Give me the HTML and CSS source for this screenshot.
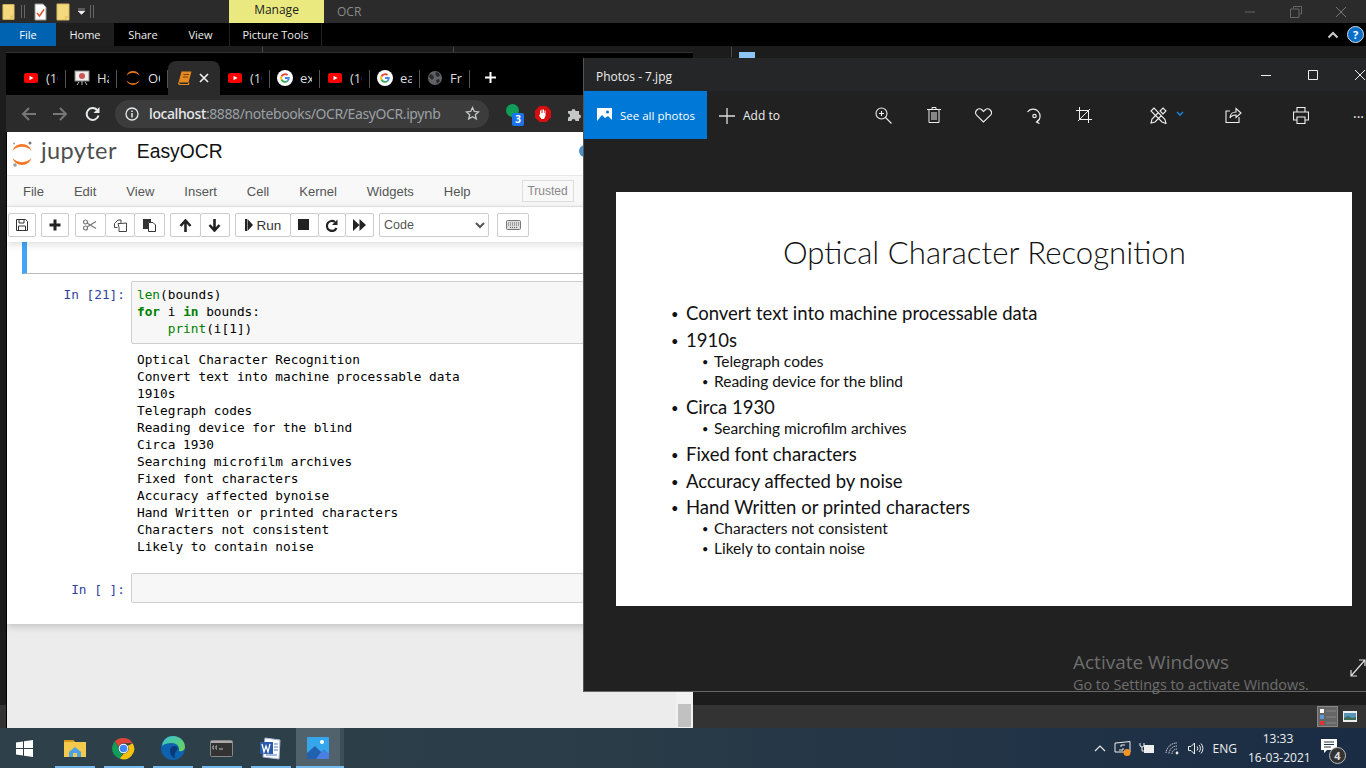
FILE: index.html
```html
<!DOCTYPE html>
<html>

<head>
  <meta charset="UTF-8">
  <title>OCR</title>
  <link rel="stylesheet" href="styles.css">
</head>

<body>
  <svg class="defs" width="0" height="0">
    <symbol id="yt" viewBox="0 0 16 16">
      <rect x="1" y="3" width="14" height="10" rx="2.5" fill="#f00" />
      <path d="M6.500 5.700v4.600L10.500 8z" fill="#fff" />
    </symbol>
    <symbol id="goog" viewBox="0 0 16 16">
      <circle cx="8" cy="8" r="8" fill="#fff" />
      <path d="M8 3.200a4.800 4.800 0 0 1 3.200 1.200L9.900 5.700A3 3 0 0 0 5.200 7L3.700 5.800A4.800 4.800 0 0 1 8 3.200z" fill="#ea4335" />
      <path d="M3.700 5.800L5.200 7a3 3 0 0 0 0 2L3.700 10.200a4.800 4.800 0 0 1 0-4.400z" fill="#fbbc05" />
      <path d="M3.700 10.200L5.200 9A3 3 0 0 0 9.800 10.400l1.400 1.200A4.800 4.800 0 0 1 3.700 10.200z" fill="#34a853" />
      <path d="M8 7.100h4.700a4.800 4.800 0 0 1-1.500 4.500L9.800 10.400a2 2 0 0 0 .9-1.500H8z" fill="#4285f4" />
    </symbol>
    <symbol id="folder" viewBox="0 0 14 18">
      <path d="M1 1h12v16H1z" fill="#f5d97e" stroke="#d9b95c" />
      <path d="M9 17v-4h4" fill="#e5c468" />
    </symbol>
  </svg>

  <div class="desktop">
    <div class="explorer">
      <div class="titlebar">
        <div class="quick">
          <svg class="qfolder" width="13" height="18"><use href="#folder" /></svg>
          <span class="qsep"></span>
          <svg class="qcheck" width="13" height="18" viewBox="0 0 13 18">
            <path d="M1 1h8l3 3v13H1z" fill="#fff" stroke="#999" />
            <path d="M3 10l2.500 3L10 6.500" fill="none" stroke="#d9532c" stroke-width="1.500" />
          </svg>
          <svg class="qfolder2" width="14" height="18"><use href="#folder" /></svg>
          <svg class="qdrop" width="7" height="7" viewBox="0 0 7 7">
            <path d="M0 1h7M0 3h7l-3.500 3.500z" fill="#eee" stroke="#eee" stroke-width=".5" />
          </svg>
          <span class="qsep"></span>
        </div>
        <div class="manage">Manage</div>
        <div class="wintitle">OCR</div>
        <div class="winbtns">
          <svg width="12" height="12" viewBox="0 0 12 12"><path d="M1 6h10" stroke="#666" /></svg>
          <svg width="12" height="12" viewBox="0 0 12 12">
            <path d="M3.500 2.500V.5h8v7.500h-2M.5 3h8.500v8.500H.5z" fill="none" stroke="#666" />
          </svg>
          <svg width="12" height="12" viewBox="0 0 12 12"><path d="M1 1l10 10M11 1L1 11" stroke="#777" /></svg>
        </div>
      </div>

      <div class="ribbon">
        <div class="rtab rfile">File</div>
        <div class="rtab rhome">Home</div>
        <div class="rtab rshare">Share</div>
        <div class="rtab rview">View</div>
        <div class="rtab rtools">Picture Tools</div>
        <div class="rright">
          <svg width="12" height="8" viewBox="0 0 12 8"><path d="M1.500 6.500L6 2l4.500 4.500" fill="none" stroke="#ccc" stroke-width="2" /></svg>
          <span class="help">?</span>
        </div>
      </div>

      <div class="exbody">
        <span class="exline exline1"></span>
        <span class="exline exline2"></span>
        <span class="exline exline3"></span>
        <span class="exthumb"></span>
      </div>

      <div class="statusbar">
        <span class="viewlist">
          <svg width="17" height="17" viewBox="0 0 17 17">
            <path d="M1 1h4v4H1z" fill="#fff" />
            <path d="M1 7h4v4H1z" fill="#5b9bd5" />
            <path d="M1 13h4v4H1z" fill="#d33" />
            <path d="M7 3h10M7 9h10M7 15h10" stroke="#888" />
          </svg>
        </span>
        <span class="viewthumb">
          <svg width="14" height="11" viewBox="0 0 14 11">
            <rect width="14" height="11" fill="#eee" />
            <rect x="1" y="2" width="12" height="7" fill="#5a93b8" />
            <path d="M1 7l4-2 4 2 4-1v3H1z" fill="#3e6b55" />
          </svg>
        </span>
      </div>
    </div>

    <div class="chrome">
      <div class="tabs">
        <div class="tab"><svg width="16" height="16"><use href="#yt" /></svg><span class="tabtext">(10)</span></div>
        <div class="tab">
          <svg width="16" height="16" viewBox="0 0 16 16">
            <rect x="1" y="1" width="14" height="10" fill="#eee" stroke="#888" />
            <circle cx="8" cy="6" r="3" fill="#c55" />
            <path d="M5 12l-2 3M11 12l2 3M8 11v4" stroke="#bbb" />
          </svg>
          <span class="tabtext">Ha</span>
        </div>
        <div class="tab">
          <svg width="16" height="16" viewBox="0 0 16 16">
            <path d="M1.500 5.500a7 7 0 0 1 13 0 9 9 0 0 0-13 0zM1.500 10.500a7 7 0 0 0 13 0 9 9 0 0 1-13 0z" fill="#e6761c" />
          </svg>
          <span class="tabtext">OCR</span>
        </div>
        <div class="tab tab-active">
          <svg width="16" height="16" viewBox="0 0 16 16">
            <path d="M4.500 1.500h10l-3 11h-10z" fill="#e58a1f" />
            <path d="M1.500 12.500c0 2 1 2 2 2h8l.5-2" fill="none" stroke="#e58a1f" stroke-width="1.200" />
            <path d="M6.500 4.500h5.500M6 7h5" stroke="#7a4408" />
          </svg>
          <svg class="tabclose" width="10" height="10" viewBox="0 0 10 10"><path d="M1 1l8 8M9 1L1 9" stroke="#eee" stroke-width="1.700" /></svg>
        </div>
        <div class="tab"><svg width="16" height="16"><use href="#yt" /></svg><span class="tabtext">(10)</span></div>
        <div class="tab"><svg width="16" height="16"><use href="#goog" /></svg><span class="tabtext">exa</span></div>
        <div class="tab"><svg width="16" height="16"><use href="#yt" /></svg><span class="tabtext">(10)</span></div>
        <div class="tab"><svg width="16" height="16"><use href="#goog" /></svg><span class="tabtext">eas</span></div>
        <div class="tab">
          <svg width="16" height="16" viewBox="0 0 16 16">
            <circle cx="8" cy="8" r="7" fill="#5f6368" />
            <path d="M3 4l3 1 1 3-2 2-3-3zM9 2l3 1 1 3-3 1-2-3zM9 10l3-1 1 2-3 3z" fill="#2a2a2a" />
          </svg>
          <span class="tabtext">Fr</span>
        </div>
        <svg class="newtab" width="13" height="13" viewBox="0 0 13 13"><path d="M6.500 1v11M1 6.500h11" stroke="#fff" stroke-width="2" /></svg>
      </div>

      <div class="toolbar">
        <svg class="navbtn" width="16" height="16" viewBox="0 0 16 16"><path d="M15 8H2M8 2L2 8l6 6" fill="none" stroke="#777" stroke-width="2" /></svg>
        <svg class="navbtn" width="16" height="16" viewBox="0 0 16 16"><path d="M1 8h13M8 2l6 6-6 6" fill="none" stroke="#777" stroke-width="2" /></svg>
        <svg class="navbtn nav-reload" width="16" height="16" viewBox="0 0 16 16"><path d="M13.500 9.500A6 6 0 1 1 12 3.800" fill="none" stroke="#e8eaed" stroke-width="2" /><path d="M14.500 1v6h-6z" fill="#e8eaed" /></svg>
        <div class="omnibox">
          <svg width="14" height="14" viewBox="0 0 14 14">
            <circle cx="7" cy="7" r="6" fill="none" stroke="#e8eaed" stroke-width="1.300" />
            <path d="M7 6v4.500M7 3.500v1.500" stroke="#e8eaed" stroke-width="1.500" />
          </svg>
          <span class="url"><b>localhost</b>:8888/notebooks/OCR/EasyOCR.ipynb</span>
          <svg class="star" width="15" height="15" viewBox="0 0 15 15">
            <path d="M7.500 1.500l1.800 4 4.200.4-3.200 2.800 1 4.200-3.800-2.200-3.800 2.200 1-4.200L1.500 5.900l4.200-.4z" fill="none" stroke="#c4c7c5" stroke-width="1.300" />
          </svg>
        </div>
        <div class="ext ext-green"><span class="badge">3</span></div>
        <svg class="ext-hand" width="18" height="18" viewBox="0 0 18 18">
          <path d="M5.500 1h7L17 5.500v7L12.500 17h-7L1 12.500v-7z" fill="#d50f0f" />
          <path d="M6 9V5.500h1V8h.5V4.500h1V8H9V4.500h1V8h.5V5.500h1V11l-1.500 3H7.500L5 10.500l.5-.5z" fill="#fff" />
        </svg>
        <svg class="ext-puzzle" width="16" height="16" viewBox="0 0 16 16">
          <path d="M1 5h3.500a2 2 0 1 1 4 0H12v3.500a2 2 0 1 1 0 4V15H8.500a2 2 0 1 0-4 0H1v-3.500a2 2 0 1 0 0-4z" fill="#c4c7c5" />
        </svg>
      </div>

      <div class="page">
        <div class="nbheader">
          <svg class="jlogo" width="22" height="28" viewBox="0 0 22 28">
            <path d="M1.500 11a10 10 0 0 1 19 0 13 13 0 0 0-19 0zM1.500 18a10 10 0 0 0 19 0 13 13 0 0 1-19 0z" fill="#f37726" />
            <circle cx="19" cy="3" r="1.500" fill="#767677" />
            <circle cx="3" cy="3.500" r="1" fill="#989798" />
            <circle cx="4" cy="25" r="1.800" fill="#9e9e9e" />
          </svg>
          <span class="jname">jupyter</span>
          <span class="nbname">EasyOCR</span>
          <span class="kernelhint"></span>
        </div>

        <div class="menubar">
          <span class="mi mi-file">File</span>
          <span class="mi">Edit</span>
          <span class="mi">View</span>
          <span class="mi">Insert</span>
          <span class="mi">Cell</span>
          <span class="mi">Kernel</span>
          <span class="mi">Widgets</span>
          <span class="mi">Help</span>
          <span class="trusted">Trusted</span>
        </div>

        <div class="nbtools">
          <div class="btngroup g-save">
            <button class="btn">
              <svg width="12" height="12" viewBox="0 0 12 12"><path d="M.5.5h9l2 2v9H.5zM3 .5v3.500h5V.5M2.500 11.500V7h7v4.500" fill="none" stroke="#333" /></svg>
            </button>
          </div>
          <div class="btngroup g-add">
            <button class="btn">
              <svg width="12" height="12" viewBox="0 0 12 12"><path d="M6 .5v11M.5 6h11" stroke="#222" stroke-width="3" /></svg>
            </button>
          </div>
          <div class="btngroup g-edit">
            <button class="btn">
              <svg width="14" height="12" viewBox="0 0 14 12">
                <circle cx="2.500" cy="3" r="2" fill="none" stroke="#777" stroke-width="1.200" />
                <circle cx="2.500" cy="9" r="2" fill="none" stroke="#777" stroke-width="1.200" />
                <path d="M4 4l9 5.500M4 8l9-5.500" stroke="#777" stroke-width="1.200" />
              </svg>
            </button>
            <button class="btn">
              <svg width="13" height="13" viewBox="0 0 13 13"><path d="M3.500 8.500H.5v-4L4 1h3v3M4 4.500h3.500L12.500 4v8.500H5v-4z" fill="none" stroke="#444" /></svg>
            </button>
            <button class="btn">
              <svg width="13" height="14" viewBox="0 0 13 14"><path d="M0 1h8v3H5v7H0z" fill="#333" /><path d="M5.500 4.500H10l2.500 2.500v6.500h-7z" fill="#fff" stroke="#333" /></svg>
            </button>
          </div>
          <div class="btngroup g-move">
            <button class="btn">
              <svg width="13" height="13" viewBox="0 0 13 13"><path d="M6.500 13V2M1.500 7l5-5.500 5 5.500" fill="none" stroke="#222" stroke-width="2.600" /></svg>
            </button>
            <button class="btn">
              <svg width="13" height="13" viewBox="0 0 13 13"><path d="M6.500 0v11M1.500 6l5 5.500 5-5.500" fill="none" stroke="#222" stroke-width="2.600" /></svg>
            </button>
          </div>
          <div class="btngroup g-run">
            <button class="btn btn-run">
              <svg width="8" height="12" viewBox="0 0 8 12"><path d="M0 0h2v12H0zM2.500 0L8 6l-5.500 6z" fill="#222" /></svg>
              <span>Run</span>
            </button>
            <button class="btn">
              <svg width="12" height="12"><rect width="11" height="11" fill="#222" /></svg>
            </button>
            <button class="btn">
              <svg width="12" height="13" viewBox="0 0 12 13"><path d="M10.500 9A5 5 0 1 1 9 3" fill="none" stroke="#222" stroke-width="2.200" /><path d="M11.500 .5v5.500h-5.500z" fill="#222" /></svg>
            </button>
            <button class="btn">
              <svg width="13" height="12" viewBox="0 0 13 12"><path d="M0 0l6.500 6L0 12zM6.500 0L13 6l-6.500 6z" fill="#222" /></svg>
            </button>
          </div>
          <select class="celltype">
            <option>Code</option>
          </select>
          <div class="btngroup g-keys">
            <button class="btn">
              <svg width="15" height="10" viewBox="0 0 15 10">
                <rect x=".5" y=".5" width="14" height="9" rx="1" fill="#ddd" stroke="#777" />
                <path d="M2 3h11M2 5h11M4 7.500h7" stroke="#666" stroke-dasharray="1 1" />
              </svg>
            </button>
          </div>
        </div>

        <div class="notebook">
          <div class="prevcell"></div>

          <div class="cell">
            <div class="prompt">In&nbsp;[21]:</div>
            <div class="input"><span class="kw2">len</span>(bounds)
<span class="kw">for</span> i <span class="kw">in</span> bounds:
    <span class="kw2">print</span>(i[1])</div>
          </div>
          <pre class="output">Optical Character Recognition
Convert text into machine processable data
1910s
Telegraph codes
Reading device for the blind
Circa 1930
Searching microfilm archives
Fixed font characters
Accuracy affected bynoise
Hand Written or printed characters
Characters not consistent
Likely to contain noise</pre>

          <div class="cell cell-empty">
            <div class="prompt">In&nbsp;[&nbsp;]:</div>
            <div class="input input-empty"></div>
          </div>
        </div>

        <div class="scrolltrack"><span class="scrollthumb"></span></div>
      </div>
    </div>

    <div class="photos">
      <div class="phtitle">
        <span>Photos - 7.jpg</span>
        <div class="phctrl">
          <svg width="12" height="12" viewBox="0 0 12 12"><path d="M1 6.500h10" stroke="#eee" /></svg>
          <svg width="12" height="12" viewBox="0 0 12 12"><path d="M1.500 1.500h9v9h-9z" fill="none" stroke="#eee" /></svg>
          <svg width="12" height="12" viewBox="0 0 12 12"><path d="M1 1l10 10M11 1L1 11" stroke="#eee" /></svg>
        </div>
      </div>
      <div class="phbar">
        <div class="seeall">
          <svg width="15" height="15" viewBox="0 0 15 15">
            <rect width="15" height="15" fill="#fff" />
            <path d="M0 13l5-6 3 3 3-2 4 4v3H0z" fill="#0078d7" />
            <circle cx="10.500" cy="4" r="1.500" fill="#0078d7" />
          </svg>
          <span>See all photos</span>
        </div>
        <div class="addto">
          <svg width="16" height="16" viewBox="0 0 16 16"><path d="M8 0v16M0 8h16" stroke="#ddd" stroke-width="1.300" /></svg>
          <span>Add to</span>
        </div>
        <svg class="ph-zoom" width="17" height="17" viewBox="0 0 17 17">
          <circle cx="6.500" cy="6.500" r="5.500" fill="none" stroke="#eee" stroke-width="1.100" />
          <path d="M10.500 10.500l6 6M6.500 4v5M4 6.500h5" stroke="#eee" stroke-width="1.100" />
        </svg>
        <svg class="ph-trash" width="14" height="16" viewBox="0 0 14 16">
          <path d="M0 2.500h14M5 2.500V.5h4v2M2 2.500v13h10v-13M5 5v8M7 5v8M9 5v8" fill="none" stroke="#eee" />
        </svg>
        <svg class="ph-heart" width="17" height="15" viewBox="0 0 17 15">
          <path d="M8.500 14L1.800 7.300a3.800 3.800 0 0 1 0-5.300 3.800 3.800 0 0 1 5.300 0l1.400 1.500L10 2a3.800 3.800 0 0 1 5.300 0 3.800 3.800 0 0 1 0 5.300z" fill="none" stroke="#eee" stroke-width="1.100" />
        </svg>
        <svg class="ph-rotate" width="17" height="17" viewBox="0 0 17 17">
          <path d="M1.500 5A7 7 0 1 1 11 15" fill="none" stroke="#eee" stroke-width="1.200" />
          <path d="M13 12.500L10.500 15l3 1.500" fill="none" stroke="#eee" stroke-width="1.200" />
          <circle cx="8.500" cy="9" r="1.700" fill="none" stroke="#eee" stroke-width="1.200" />
        </svg>
        <svg class="ph-crop" width="16" height="16" viewBox="0 0 16 16">
          <path d="M3.500 0v12.500H16M0 3.500h12.500V16M2 14L14 2" fill="none" stroke="#eee" />
        </svg>
        <svg class="ph-draw" width="17" height="17" viewBox="0 0 17 17">
          <path d="M4 1L1 4l11 11 4 1.500-1-4zM13 1l3 3-3 3-3-3zM8 6l-6 6-1 4 4-1 6-6" fill="none" stroke="#eee" stroke-width="1.100" />
        </svg>
        <svg class="ph-chev" width="8" height="6" viewBox="0 0 8 6"><path d="M1 1l3 3 3-3" fill="none" stroke="#1a7fd4" stroke-width="1.600" /></svg>
        <svg class="ph-share" width="17" height="16" viewBox="0 0 17 16">
          <path d="M14 10v5.500H1V4h4M5 11c0-4 3-6 6-6V1.500L16 6l-5 4.500V8c-3 0-5 1-6 3z" fill="none" stroke="#eee" stroke-width="1.100" />
        </svg>
        <svg class="ph-print" width="16" height="17" viewBox="0 0 16 17">
          <path d="M4 5V.5h8V5M4 13H.5V5h15v8H12M4 10h8v6.500H4z" fill="none" stroke="#eee" stroke-width="1.100" />
        </svg>
        <span class="ph-more">...</span>
      </div>

      <div class="slide">
        <div class="slidetitle">Optical Character Recognition</div>
        <ul class="points">
          <li class="l1">Convert text into machine processable data</li>
          <li class="l1">1910s</li>
          <li class="l2">Telegraph codes</li>
          <li class="l2">Reading device for the blind</li>
          <li class="l1 l1-loose">Circa 1930</li>
          <li class="l2">Searching microfilm archives</li>
          <li class="l1 l1-loose">Fixed font characters</li>
          <li class="l1">Accuracy affected by noise</li>
          <li class="l1 l1-tight">Hand Written or printed characters</li>
          <li class="l2">Characters not consistent</li>
          <li class="l2">Likely to contain noise</li>
        </ul>
      </div>

      <div class="activate">
        <div class="acttitle">Activate Windows</div>
        <div class="actsub">Go to Settings to activate Windows.</div>
      </div>
      <svg class="expand" width="16" height="18" viewBox="0 0 16 18">
        <path d="M1 17L15 1M9 1h6v6M1 11v6h6" fill="none" stroke="#ddd" stroke-width="1.200" />
      </svg>
    </div>

    <div class="taskbar">
      <svg class="tb-win" width="17" height="17" viewBox="0 0 17 17">
        <path d="M0 2.500l7-1v6.500H0zM8 1.300L17 0v8H8zM0 9h7v6.500l-7-1zM8 9h9v8l-9-1.300z" fill="#fff" />
      </svg>
      <div class="tbicon">
        <svg width="22" height="18" viewBox="0 0 22 18">
          <path d="M0 1h9l2 2h11v15H0z" fill="#f5c94e" />
          <path d="M0 1h9l1 2H0z" fill="#d99a1c" />
          <path d="M5 13l6-5 6 5v5H5z" fill="#4aa3e8" />
          <path d="M9 14h4v4H9z" fill="#f5c94e" />
        </svg>
      </div>
      <div class="tbicon">
        <svg width="23" height="23" viewBox="0 0 24 24">
          <path d="M12 1a11 11 0 0 1 9.500 5.500H12a5.500 5.500 0 0 0-5.200 3.800L3 4.500A11 11 0 0 1 12 1z" fill="#db4437" />
          <path d="M3 4.500l4 6.500a5.500 5.500 0 0 0 4 6.400L8 22.500A11 11 0 0 1 3 4.500z" fill="#0f9d58" />
          <path d="M21.500 6.500A11 11 0 0 1 8 22.500l4-5a5.500 5.500 0 0 0 4.500-8.500z" fill="#f4c20d" />
          <circle cx="12" cy="12" r="5" fill="#fff" />
          <circle cx="12" cy="12" r="4" fill="#4285f4" />
        </svg>
      </div>
      <div class="tbicon">
        <svg width="24" height="24" viewBox="0 0 24 24">
          <defs>
            <linearGradient id="edgeg" x1="0" y1="0" x2="1" y2="1">
              <stop offset="0" stop-color="#36c2d6" />
              <stop offset="1" stop-color="#6fd34f" />
            </linearGradient>
          </defs>
          <circle cx="12" cy="12" r="12" fill="#0d63b0" />
          <path d="M1 10C2 3 7 0 12 0c7 0 12 5 12 11 0 3-3 5-6 4 1-4-2-8-7-8-5 0-8 1-10 3z" fill="url(#edgeg)" />
          <path d="M9 15c0-3 2-5 5-5 3 0 3 3 2 4-2 3-4 6-1 8-4 0-6-3-6-7z" fill="#0a3a7a" />
        </svg>
      </div>
      <div class="tbicon">
        <svg width="23" height="17" viewBox="0 0 23 17">
          <rect x=".5" y=".5" width="22" height="16" rx="1" fill="#333" stroke="#888" />
          <rect x="1" y="1" width="21" height="2" fill="#aaa" />
          <path d="M4 6H3v3h1M7 6H6v3h1M9 9h4" fill="none" stroke="#bbb" />
        </svg>
      </div>
      <div class="tbicon">
        <svg width="23" height="23" viewBox="0 0 23 23">
          <path d="M6 1l15 2-1 19-16-2z" fill="#fff" stroke="#a8b8d8" />
          <rect x="1" y="5" width="13" height="12" fill="#2a5aa8" />
          <path d="M3 7l2 8 2-6 2 6 2-8" fill="none" stroke="#fff" stroke-width="1.300" />
          <path d="M15 7h4M15 10h4M15 13h4M7 18h11" stroke="#4a78c0" />
        </svg>
      </div>
      <div class="tbicon tb-photos">
        <svg width="22" height="22" viewBox="0 0 22 22">
          <rect width="22" height="22" rx="1" fill="#35a6ec" />
          <circle cx="15" cy="5" r="2" fill="#fff" />
          <path d="M0 16l8-7 6 6 3-2 5 4v5H0z" fill="#2260b0" />
          <path d="M14 15l3-2 5 4v5H9z" fill="#4a7ee0" />
        </svg>
      </div>

      <div class="tray">
        <svg class="tr-caret" width="12" height="7" viewBox="0 0 12 7"><path d="M1 6l5-5 5 5" fill="none" stroke="#eee" stroke-width="1.100" /></svg>
        <svg class="tr-action" width="18" height="15" viewBox="0 0 18 15">
          <path d="M2 2l14-1.500V11H1V2z" fill="none" stroke="#eee" />
          <path d="M11 4H7v2M5 9h4V7" fill="none" stroke="#eee" />
          <circle cx="13" cy="11.500" r="3.500" fill="#f7931e" />
        </svg>
        <svg class="tr-batt" width="16" height="12" viewBox="0 0 16 12">
          <rect x="5.500" y="3.500" width="9" height="7" fill="#eee" stroke="#eee" />
          <path d="M1 1v3l2 1 2-1V1M3 5v4h3" fill="none" stroke="#eee" />
        </svg>
        <svg class="tr-wifi" width="15" height="13" viewBox="0 0 15 13">
          <path d="M1 11a11 11 0 0 1 11-10M4 11.500A8 8 0 0 1 12 4M7 12a5 5 0 0 1 5-5" fill="none" stroke="#dde" stroke-dasharray="1.500 .7" />
          <circle cx="12" cy="11" r="1.400" fill="#eee" />
        </svg>
        <svg class="tr-vol" width="16" height="13" viewBox="0 0 16 13">
          <path d="M.5 4.500H3L6.500 1v11L3 8.500H.5z" fill="none" stroke="#eee" />
          <path d="M9 4.500a3 3 0 0 1 0 4M11 3a5 5 0 0 1 0 7M13 1.500a7.500 7.500 0 0 1 0 10" fill="none" stroke="#eee" />
        </svg>
        <span class="eng">ENG</span>
        <div class="clock"><div>13:33</div><div>16-03-2021</div></div>
        <div class="notif">
          <svg width="17" height="15" viewBox="0 0 17 15">
            <path d="M0 0h16v11H6l-3 3v-3H0z" fill="#fff" />
            <path d="M3 3h10M3 5.500h10M3 8h7" stroke="#243548" />
          </svg>
          <span class="notifcount">4</span>
        </div>
      </div>
      <span class="ul ul1"></span>
      <span class="ul ul2"></span>
      <span class="ul ul3"></span>
      <span class="ul ul4"></span>
      <span class="ul ul5"></span>
      <span class="ul ul6"></span>
    </div>
  </div>
</body>

</html>
```

FILE: styles.css
```css
html,
body {
  margin: 0;
  padding: 0;
  height: 100%;
  overflow: hidden;
}

.defs {
  position: absolute;
}

.desktop {
  position: relative;
  width: 1366px;
  height: 768px;
  overflow: hidden;
  font-family: "Open Sans", "Liberation Sans", sans-serif;
  background: #1c1c1c;
}

/* file explorer, behind everything */
.explorer {
  display: flex;
  flex-direction: column;
  height: 100%;
}

.titlebar {
  display: flex;
  height: 23px;
  background: #2b2b2b;
  color: #999;
  font-size: 12px;
}

.quick {
  display: flex;
  align-items: center;
  width: 229px;
}

.qfolder {
  margin-left: 2px;
}

.qsep {
  width: 2px;
  height: 13px;
  border: 1px solid #666;
  border-width: 0 1px;
  margin-left: 6px;
}

.qcheck {
  margin-left: 9px;
}

.qfolder2 {
  margin-left: 9px;
}

.qdrop {
  margin-left: 8px;
}

.quick .qdrop + .qsep {
  margin-left: 5px;
}

.manage {
  width: 95px;
  background: #e9e97f;
  color: #222;
  text-align: center;
  line-height: 20px;
  font-size: 12px;
}

.wintitle {
  margin-left: 13px;
  line-height: 24px;
  color: #8a8a8a;
}

.winbtns {
  margin-left: auto;
  padding-right: 19px;
  display: flex;
  gap: 33.500px;
  align-items: center;
}

.ribbon {
  display: flex;
  height: 23px;
  background: #000;
  color: #eee;
  font-size: 11px;
  line-height: 24px;
}

.rtab {
  text-align: center;
}

.rfile {
  width: 56px;
  background: #0063b1;
  color: #fff;
}

.rhome {
  width: 58px;
  background: #1e1e1e;
}

.rshare {
  width: 58px;
}

.rview {
  width: 57px;
}

.rtools {
  width: 91px;
  border-left: 1px solid #222;
  border-right: 1px solid #222;
}

.rright {
  margin-left: auto;
  display: flex;
  align-items: center;
  gap: 8px;
  padding-right: 2px;
}

.help {
  width: 15px;
  height: 15px;
  border-radius: 50%;
  border: 1px solid #ddd;
  background: #0a6ec8;
  color: #fff;
  font-size: 11px;
  font-weight: bold;
  line-height: 15px;
  text-align: center;
}

.exbody {
  position: relative;
  flex: 1;
  background: #1c1c1c;
}

.exline {
  position: absolute;
  top: 1px;
  height: 5px;
  width: 1px;
  background: #4a4a4a;
}

.exline1 {
  left: 262px;
}

.exline2 {
  left: 453px;
}

.exline3 {
  left: 731px;
  height: 10px;
}

.exthumb {
  position: absolute;
  left: 739px;
  top: 6px;
  width: 16px;
  height: 6px;
  background: #8cc4f5;
}

.statusbar {
  display: flex;
  align-items: center;
  justify-content: flex-end;
  height: 23px;
  background: #333;
  padding-right: 9px;
  margin-bottom: 40px;
}

.viewlist {
  display: flex;
  align-items: center;
  justify-content: center;
  width: 21px;
  height: 21px;
  background: #666;
  border: 1px solid #888;
  box-sizing: border-box;
}

.viewthumb {
  display: flex;
  margin-left: 5px;
}

/* chrome window */
.chrome {
  position: absolute;
  left: 6px;
  top: 52px;
  width: 687px;
  height: 676px;
  display: flex;
  flex-direction: column;
  background: #000;
  border-top: 1px solid #333;
  box-sizing: border-box;
}

.tabs {
  display: flex;
  align-items: center;
  height: 42px;
  padding: 8px 0 0 9px;
  box-sizing: border-box;
  background: #000;
  flex-shrink: 0;
}

.tab {
  display: flex;
  align-items: center;
  width: 51px;
  height: 34px;
  box-sizing: border-box;
  padding-left: 8px;
  color: #ddd;
  font-size: 13px;
  position: relative;
}

.tab::after {
  content: "";
  position: absolute;
  right: 0;
  top: 9px;
  height: 18px;
  width: 1px;
  background: #555;
}

.tab-active {
  background: #2b2b2b;
  border-radius: 8px 8px 0 0;
  width: 52px;
  padding-left: 9px;
}

.tab-active::after {
  display: none;
}

.tab-active ~ .tab {
  width: 50px;
  padding-left: 7px;
}

.tabtext {
  display: block;
  margin-left: 7px;
  width: 12px;
  overflow: hidden;
  white-space: nowrap;
}

.tabclose {
  margin-left: 6px;
}

.newtab {
  margin-left: 14px;
  margin-top: -1px;
}

.toolbar {
  position: relative;
  display: flex;
  align-items: center;
  height: 37px;
  background: #2b2b2b;
  flex-shrink: 0;
}

.navbtn {
  margin-left: 15px;
}

.nav-reload {
  margin-left: 17px;
}

.omnibox {
  display: flex;
  align-items: center;
  width: 374px;
  height: 28px;
  margin-left: 14px;
  padding: 0 9px 0 10px;
  box-sizing: border-box;
  border-radius: 14px;
  background: #3c3c3c;
  color: #9aa0a6;
}

.url {
  margin-left: 10px;
  font-size: 14px;
  letter-spacing: -.4px;
  white-space: nowrap;
  font-family: "Noto Sans", sans-serif;
}

.url b {
  font-weight: 500;
  color: #e8eaed;
}

.star {
  margin-left: auto;
}

.ext-green {
  position: relative;
  width: 13px;
  height: 13px;
  margin-left: 17px;
  margin-top: -6px;
  border-radius: 50%;
  background: #0f9d58;
}

.badge {
  position: absolute;
  left: 6px;
  top: 9px;
  width: 12px;
  height: 13px;
  border-radius: 2px;
  background: #1a73e8;
  color: #fff;
  font-size: 10px;
  font-weight: bold;
  line-height: 13px;
  text-align: center;
}

.ext-hand {
  margin-left: 15px;
}

.ext-puzzle {
  margin-left: 15px;
}

.page {
  position: relative;
  flex: 1;
  margin-left: 1px;
  background: #ececec;
  font-family: "Liberation Sans", Arial, sans-serif;
  display: flex;
  flex-direction: column;
}

.nbheader {
  display: flex;
  align-items: center;
  height: 44px;
  background: #fff;
  border-bottom: 1px solid #e7e7e7;
  box-sizing: border-box;
  flex-shrink: 0;
}

.jlogo {
  margin-left: 4px;
}

.jname {
  margin-left: 8px;
  margin-top: -8px;
  font-family: "Lato", sans-serif;
  font-size: 23.500px;
  color: #4e4e4e;
  letter-spacing: .4px;
}

.nbname {
  margin-left: 20px;
  margin-top: -4px;
  font-size: 19.300px;
  color: #111;
}

.kernelhint {
  position: absolute;
  left: 572px;
  top: 13px;
  width: 12px;
  height: 12px;
  border-radius: 50%;
  background: #4a90c8;
}

.menubar {
  display: flex;
  align-items: center;
  height: 31px;
  background: #f8f8f8;
  border-bottom: 1px solid #e7e7e7;
  box-sizing: border-box;
  font-size: 13px;
  color: #555;
  flex-shrink: 0;
}

.mi {
  display: block;
  margin-left: 30px;
}

.mi-file {
  margin-left: 16px;
}

.trusted {
  margin-left: 51px;
  width: 52px;
  height: 22px;
  border: 1px solid #ddd;
  box-sizing: border-box;
  font-size: 12px;
  line-height: 20px;
  text-align: center;
  color: #888;
}

.nbtools {
  display: flex;
  align-items: center;
  height: 35px;
  background: #fff;
  padding: 1px 0 0 1px;
  box-sizing: border-box;
  box-shadow: 0 2px 8px rgba(0, 0, 0, .15);
  position: relative;
  flex-shrink: 0;
}

.btngroup {
  display: flex;
  height: 24px;
  margin-right: 5px;
}

.g-save,
.g-add {
  width: 28px;
}

.g-add {
  margin-right: 6px;
}

.g-edit {
  width: 90px;
}

.g-move {
  width: 60px;
}

.g-run {
  width: 139px;
}

.g-keys {
  width: 32px;
}

.btn {
  display: flex;
  flex: 1;
  align-items: center;
  justify-content: center;
  gap: 4px;
  min-width: 0;
  height: 24px;
  padding: 0;
  border: 1px solid #ccc;
  border-radius: 2px;
  background: #fff;
  color: #333;
  font-family: "Liberation Sans", Arial, sans-serif;
  font-size: 13.500px;
}

.btn + .btn {
  margin-left: -1px;
}

.g-run .btn-run {
  flex: none;
  width: 56px;
}

.celltype {
  width: 110px;
  height: 24px;
  margin-right: 8px;
  padding: 0;
  border: 1px solid #ccc;
  border-radius: 2px;
  background: #fff;
  color: #555;
  font-family: "Liberation Sans", Arial, sans-serif;
  font-size: 12.500px;
}

.notebook {
  height: 382px;
  background: #fff;
  box-shadow: 0 2px 8px rgba(0, 0, 0, .2);
  overflow: hidden;
  font-family: "DejaVu Sans Mono", monospace;
  font-size: 12.780px;
  line-height: 17px;
  flex-shrink: 0;
}

.prevcell {
  height: 31px;
  margin-left: 15px;
  border-left: 5px solid #42a5f5;
  border-bottom: 1px solid #bbb;
}

.cell {
  display: flex;
  margin-top: 7px;
}

.prompt {
  width: 118px;
  padding: 5px 6px 0 0;
  text-align: right;
  color: #303f9f;
  flex-shrink: 0;
}

.input {
  flex: 1;
  height: 63px;
  box-sizing: border-box;
  padding: 4px 5px;
  border: 1px solid #cfcfcf;
  border-radius: 2px;
  background: #f7f7f7;
  white-space: pre;
}

.kw {
  color: #008000;
  font-weight: bold;
}

.kw2 {
  color: #008000;
}

.output {
  margin: 7px 0 0 130px;
  font: inherit;
  color: #000;
}

.cell-empty {
  margin-top: 18px;
}

.input-empty {
  height: 30px;
}

.cell-empty .prompt {
  padding-top: 8px;
}

.scrolltrack {
  position: absolute;
  right: 0;
  bottom: 0;
  display: flex;
  align-items: flex-end;
  justify-content: center;
  width: 17px;
  height: 36px;
  background: #f1f1f1;
}

.scrollthumb {
  width: 13px;
  height: 23px;
  margin-bottom: 1px;
  background: #c1c1c1;
}

/* photos window */
.photos {
  position: absolute;
  left: 583px;
  top: 58px;
  width: 790px;
  height: 634px;
  background: #212121;
  border-left: 1px solid #555;
  border-bottom: 1px solid #666;
  box-sizing: border-box;
  color: #eee;
  font-size: 12px;
}

.phtitle {
  display: flex;
  align-items: center;
  height: 33px;
  padding-left: 12px;
  padding-top: 4px;
  box-sizing: border-box;
  background: #252627;
}

.phctrl {
  margin-left: auto;
  display: flex;
  gap: 35px;
  margin-right: 7px;
  margin-top: -4px;
}

.phbar {
  position: relative;
  height: 48px;
}

.seeall {
  display: flex;
  align-items: center;
  gap: 8px;
  width: 123px;
  height: 48px;
  padding-left: 13px;
  box-sizing: border-box;
  background: #0078d7;
  color: #fff;
  font-size: 11.500px;
}

.addto {
  position: absolute;
  left: 135px;
  top: 16px;
  display: flex;
  align-items: center;
  gap: 8px;
}

.phbar > svg,
.ph-more {
  position: absolute;
  top: 16px;
}

.ph-zoom {
  left: 291px;
}

.ph-trash {
  left: 343px;
}

.ph-heart {
  left: 391px;
  top: 17px !important;
}

.ph-rotate {
  left: 442px;
}

.ph-crop {
  left: 492px;
}

.ph-draw {
  left: 566px;
}

.ph-chev {
  left: 592px;
  top: 20px !important;
}

.ph-share {
  left: 641px;
}

.ph-print {
  left: 709px;
}

.ph-more {
  left: 769px;
  top: 12px;
  font-size: 14px;
}

.slide {
  width: 736px;
  height: 414px;
  margin: 53px 0 0 32px;
  padding-top: 40px;
  box-sizing: border-box;
  background: #fff;
  color: #111;
  font-family: "Lato", sans-serif;
  overflow: hidden;
}

.slidetitle {
  height: 40px;
  line-height: 40px;
  padding-left: 167px;
  font-size: 31.200px;
  font-weight: 300;
  white-space: nowrap;
}

.points {
  list-style: none;
  margin: 29px 0 0;
  padding: 0;
}

.l1 {
  margin-top: 3px;
  padding-left: 70px;
  font-size: 18.500px;
  line-height: 24px;
}

.l1-loose {
  margin-top: 4px;
}

.l1-tight {
  margin-top: 2px;
}

.l2 {
  margin-top: -1px;
  margin-bottom: 1px;
  padding-left: 98px;
  font-size: 15.500px;
  line-height: 20px;
}

.l1::before,
.l2::before {
  content: "•";
  display: inline-block;
  width: 15px;
  margin-left: -15px;
  font-size: 13px;
  line-height: 1;
  vertical-align: 1px;
}

.l2::before {
  width: 12px;
  margin-left: -12px;
  font-size: 11px;
}

.activate {
  position: absolute;
  left: 489px;
  top: 592px;
  color: #6e6e6e;
}

.acttitle {
  font-size: 19px;
  line-height: 24px;
}

.actsub {
  font-size: 14.400px;
  line-height: 22px;
}

.expand {
  position: absolute;
  left: 766px;
  top: 601px;
}

/* taskbar */
.taskbar {
  position: absolute;
  left: 0;
  bottom: 0;
  width: 1366px;
  height: 40px;
  display: flex;
  align-items: center;
  background: linear-gradient(90deg, #2e4049 0%, #2b3d48 40%, #1a2c44 100%);
}

.tb-win {
  margin-left: 16px;
  margin-right: 17px;
}

.tbicon {
  display: flex;
  align-items: center;
  justify-content: center;
  width: 49px;
  height: 40px;
}

.tb-photos {
  background: #51626c;
  width: 44px;
  margin-left: 1px;
  box-shadow: 4px 0 0 #3c4e58;
}

.tray {
  margin-left: auto;
  display: flex;
  align-items: center;
  color: #eee;
  position: relative;
  height: 40px;
}

.tr-caret {
  margin-right: 8px;
}

.tr-action {
  margin-right: 7px;
}

.tr-batt {
  margin-right: 10px;
}

.tr-wifi {
  margin-right: 8px;
}

.tr-vol {
  margin-right: 9px;
}

.eng {
  font-size: 12px;
  margin-right: 11px;
}

.clock {
  width: 60px;
  text-align: center;
  font-size: 12px;
  line-height: 19px;
  margin-right: 13px;
  white-space: nowrap;
}

.notif {
  position: relative;
  width: 45px;
  height: 40px;
}

.notif svg {
  position: absolute;
  left: 0;
  top: 11px;
}

.notifcount {
  position: absolute;
  left: 8px;
  top: 19px;
  width: 15px;
  height: 15px;
  border: 1px solid #bbb;
  border-radius: 50%;
  background: #333;
  color: #ddd;
  font-size: 11px;
  font-weight: bold;
  line-height: 15px;
  text-align: center;
}

.ul {
  position: absolute;
  bottom: 0;
  height: 2px;
  background: #76b9ed;
}

.ul1 {
  left: 55px;
  width: 40px;
}

.ul2 {
  left: 104px;
  width: 40px;
}

.ul3 {
  left: 153px;
  width: 40px;
}

.ul4 {
  left: 202px;
  width: 40px;
}

.ul5 {
  left: 251px;
  width: 40px;
}

.ul6 {
  left: 296px;
  width: 48px;
}
```
